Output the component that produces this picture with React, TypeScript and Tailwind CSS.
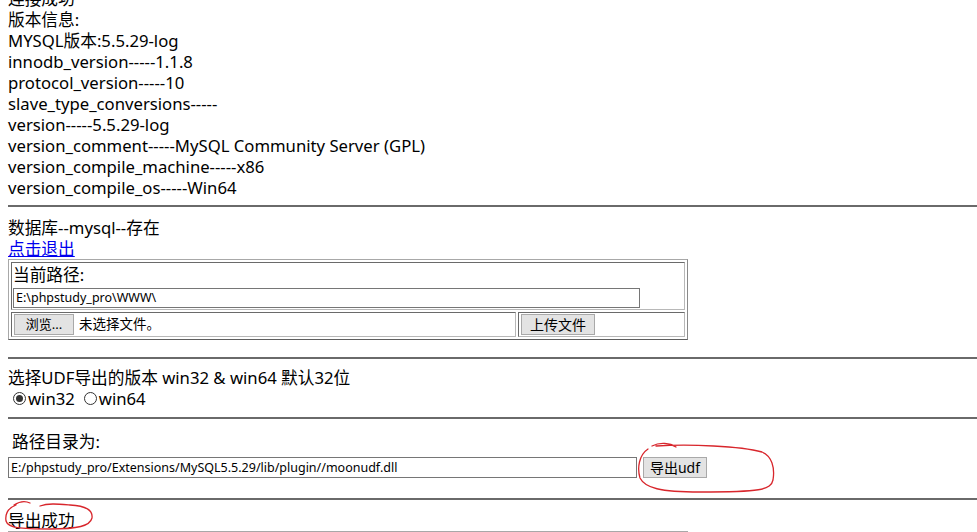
import React from "react";

const infoLines = [
  "连接成功",
  "版本信息:",
  "MYSQL版本:5.5.29-log",
  "innodb_version-----1.1.8",
  "protocol_version-----10",
  "slave_type_conversions-----",
  "version-----5.5.29-log",
  "version_comment-----MySQL Community Server (GPL)",
  "version_compile_machine-----x86",
  "version_compile_os-----Win64",
];

const Rule = ({ className }: { className: string }) => (
  <div className={`h-[2px] bg-[#6a6a6a] ${className}`} />
);

const Btn = ({ children, className = "" }: { children: React.ReactNode; className?: string }) => (
  <button
    type="button"
    className={`h-[21px] border border-[#a9a9a9] bg-[#e3e3e3] text-[13px] leading-[19px] text-black ${className}`}
  >
    {children}
  </button>
);

const Radio = ({ checked, label }: { checked?: boolean; label: string }) => (
  <span className="inline-flex items-center">
    <span className="flex h-[13px] w-[13px] items-center justify-center rounded-full border border-[#333] bg-white">
      {checked && <span className="h-[7px] w-[7px] rounded-full bg-[#333]" />}
    </span>
    <span className="ml-[2px]">{label}</span>
  </span>
);

export default function App() {
  return (
    <div className="relative h-[532px] overflow-hidden bg-white font-['Noto_Sans','Noto_Sans_CJK_SC',sans-serif] text-[16.7px] leading-[21px] text-black">
      <div className="-mt-[12px] pl-2">
        {infoLines.map((l) => (
          <div key={l}>{l}</div>
        ))}

        <Rule className="mt-[7px] mb-[10px]" />

        <div>数据库--mysql--存在</div>
        <a href="#" className="block text-[#0000ee] underline">
          点击退出
        </a>

        {/* upload table */}
        <div className="flex w-[680px] flex-col gap-[2px] border border-[#a8a8a8] border-b-[#5f5f5f] border-r-[#8a8a8a] p-[2px]">
          <div className="border border-[#6a6a6a] border-b-[#b8b8b8] border-r-[#b8b8b8] p-[1px]">
            <div>当前路径:</div>
            <input
              readOnly
              value="E:\phpstudy_pro\WWW\"
              className="h-[20px] w-[627px] border border-[#767676] px-[2px] text-[12.5px] outline-none"
            />
          </div>
          <div className="flex gap-[2px]">
            <div className="flex w-[505px] items-center border border-[#6a6a6a] border-b-[#b8b8b8] border-r-[#b8b8b8] p-[1px]">
              <Btn className="ml-[1px] w-[60px]">浏览...</Btn>
              <span className="ml-[5px] text-[13.5px]">未选择文件。</span>
            </div>
            <div className="flex flex-1 items-center border border-[#6a6a6a] border-b-[#b8b8b8] border-r-[#b8b8b8] p-[1px]">
              <Btn className="ml-[1px] w-[74px] text-[14px]">上传文件</Btn>
            </div>
          </div>
        </div>

        <Rule className="mt-[17px] mb-[8px]" />

        <div>选择UDF导出的版本 win32 &amp; win64 默认32位</div>
        <div className="flex gap-[9px] pl-[5px]">
          <Radio checked label="win32" />
          <Radio label="win64" />
        </div>

        <Rule className="mt-[8px] mb-[12px]" />

        <div className="pl-1">路径目录为:</div>
        <div className="mt-[5px] flex items-center gap-[6px]">
          <input
            readOnly
            value="E:/phpstudy_pro/Extensions/MySQL5.5.29/lib/plugin//moonudf.dll"
            className="h-[21px] w-[629px] border border-[#767676] px-[2px] text-[12.5px] outline-none"
          />
          <Btn className="w-[64px] text-[14px]">导出udf</Btn>
        </div>

        <Rule className="mt-[20px] mb-[10px]" />

        <div>导出成功</div>
        <div className="flex w-[680px] gap-[2px] border border-[#a8a8a8] p-[1px]">
          <div className="h-[30px] w-[88px] border border-[#6a6a6a]" />
          <div className="h-[30px] flex-1 border border-[#6a6a6a]" />
        </div>
      </div>

      {/* hand-drawn red marks */}
      <svg className="pointer-events-none absolute inset-0" width="977" height="532" viewBox="0 0 977 532" fill="none">
        <path
          d="M652 446 C660 442 670 443 676 447 M656 446 C690 444 740 446 762 452 C772 456 775 468 773 480 C771 490 760 492 700 492 C660 492 645 488 640 478 C637 468 639 455 648 449"
          stroke="#d8262c"
          strokeWidth="1.3"
          strokeLinecap="round"
        />
        <path
          d="M14 505 C20 501 26 501 30 503 M16 505 C8 508 5 514 6 521 C8 528 20 529 50 529 C78 529 90 526 92 518 C93 510 86 506 70 505 C58 504 48 503 40 506"
          stroke="#d8262c"
          strokeWidth="1.3"
          strokeLinecap="round"
        />
      </svg>
    </div>
  );
}
